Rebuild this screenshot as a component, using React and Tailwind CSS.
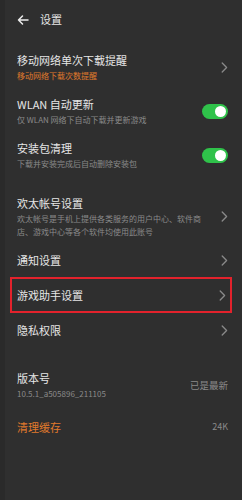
import React from 'react';

const font = { fontFamily: '"Noto Sans CJK SC", "Noto Sans", sans-serif' };

const Chevron = () => (
    <svg width="7" height="11" viewBox="0 0 7 11" className="shrink-0">
        <path d="M1.2 1 L5.6 5.5 L1.2 10" fill="none" stroke="#8a8a8a" strokeWidth="1.3" strokeLinecap="round" strokeLinejoin="round" />
    </svg>
);

const Toggle = () => (
    <div className="w-[26px] h-[15px] rounded-full bg-[#2fc24a] flex items-center justify-end pr-[2px] shrink-0">
        <div className="w-[11px] h-[11px] rounded-full bg-white" />
    </div>
);

const Row = ({ title, sub, subClass = 'text-[#8a8a8a]', right, height, boxed }) => (
    <div className={`flex items-center ${height} ${boxed ? 'mx-[10px] border-2 border-[#e3222c] pl-[5px] pr-[4px]' : 'pl-[17px] pr-[14px]'}`}>
        <div className="flex-1 min-w-0">
            <div className="text-[11px] leading-[15px] text-[#e6e6e6]">{title}</div>
            {sub && <div className={`text-[8px] leading-[13px] mt-[1px] pr-[20px] ${subClass}`}>{sub}</div>}
        </div>
        {right}
    </div>
);

export default function App() {
    return (
        <div className="w-[242px] h-[500px] bg-[#2f2f2f] border-l-[5px] border-[#2a2a2a] overflow-hidden" style={font}>
            <div className="h-[45px] flex items-start pt-[12px] pl-[11px] gap-[10px]">
                <svg width="14" height="14" viewBox="0 0 14 14" className="mt-[1px]">
                    <path d="M12 7 H2.5 M6.5 3 L2.5 7 L6.5 11" fill="none" stroke="#ededed" strokeWidth="1.5" strokeLinecap="round" strokeLinejoin="round" />
                </svg>
                <span className="text-[11px] leading-[15px] text-[#e6e6e6]">设置</span>
            </div>
            <div className="-ml-[5px]">
                <Row height="h-[44px]" title="移动网络单次下载提醒" sub="移动网络下载次数提醒" subClass="text-[#e07a2c]" right={<Chevron />} />
                <Row height="h-[44px]" title="WLAN 自动更新" sub="仅 WLAN 网络下自动下载并更新游戏" right={<Toggle />} />
                <Row height="h-[44px]" title="安装包清理" sub="下载并安装完成后自动删除安装包" right={<Toggle />} />
                <div className="h-[13px]" />
                <Row height="h-[53px]" title="欢太帐号设置" sub="欢太帐号是手机上提供各类服务的用户中心、软件商店、游戏中心等各个软件均使用此账号" right={<Chevron />} />
                <Row height="h-[34px]" title="通知设置" right={<Chevron />} />
                <Row height="h-[36px]" boxed title="游戏助手设置" right={<Chevron />} />
                <Row height="h-[34px]" title="隐私权限" right={<Chevron />} />
                <div className="h-[18px]" />
                <Row height="h-[41px]" title="版本号" sub="10.5.1_a505896_211105" right={<span className="text-[9.5px] text-[#8a8a8a]">已是最新</span>} />
                <div className="h-[4px]" />
                <div className="flex items-center h-[34px] pl-[17px] pr-[14px]">
                    <div className="flex-1 text-[11px] text-[#e07a2c]">清理缓存</div>
                    <span className="text-[9px] text-[#8a8a8a]">24K</span>
                </div>
            </div>
        </div>
    );
}
